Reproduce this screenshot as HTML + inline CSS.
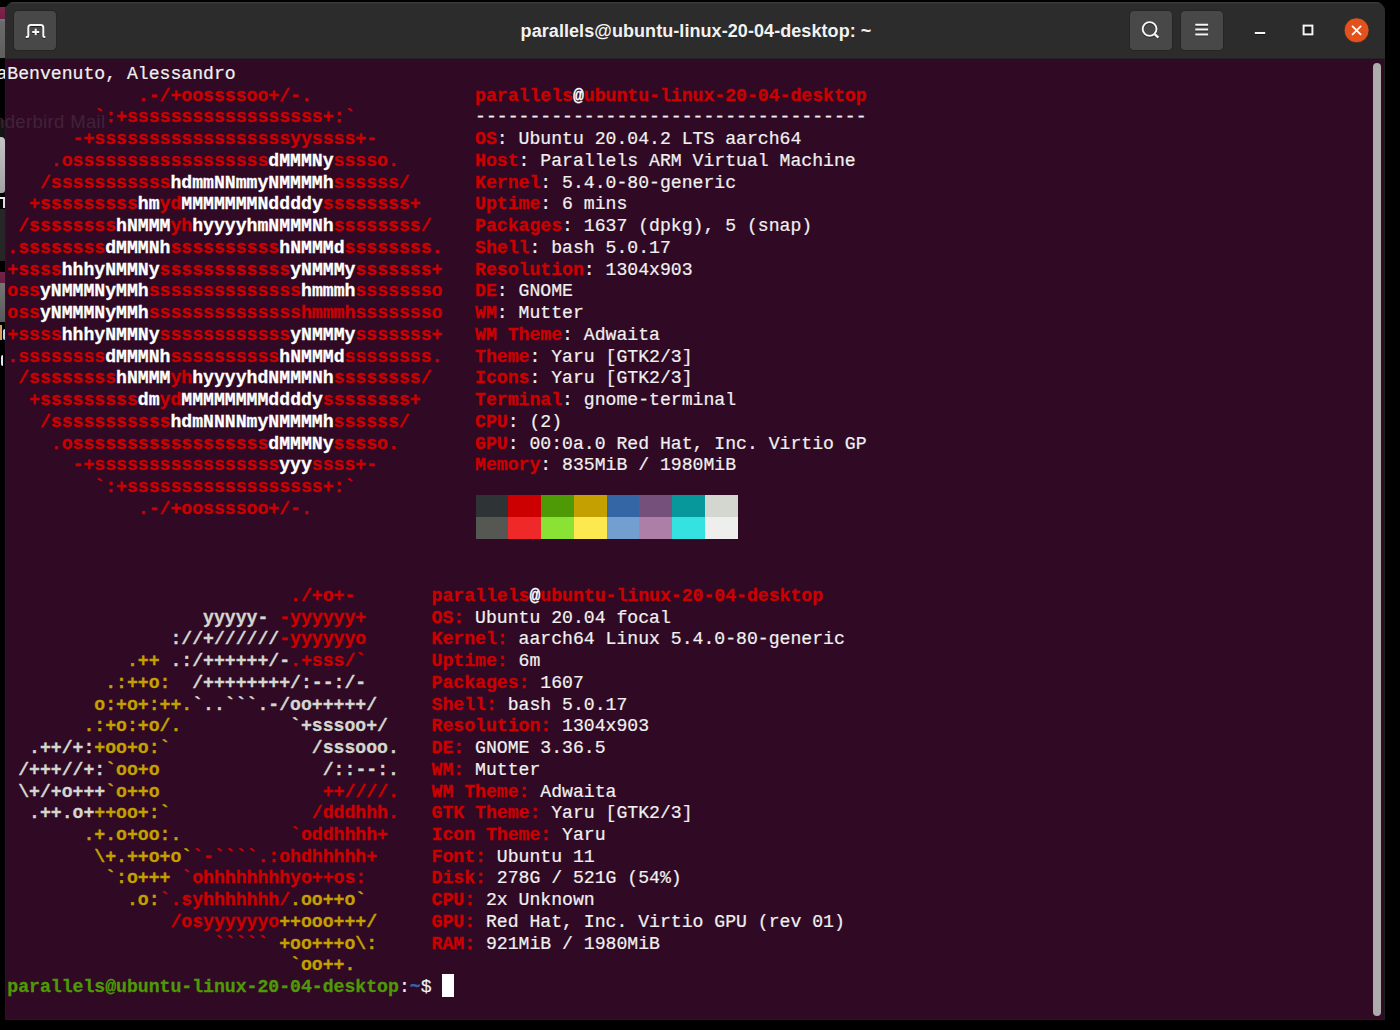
<!DOCTYPE html>
<html>
<head>
<meta charset="utf-8">
<title>parallels@ubuntu-linux-20-04-desktop: ~</title>
<style>
html,body{margin:0;padding:0;}
body{width:1400px;height:1030px;background:#000;overflow:hidden;position:relative;font-family:"Liberation Sans",sans-serif;}
#desk{position:absolute;left:0;top:0;width:8px;height:1030px;overflow:hidden;}
#desk div{position:absolute;left:0;width:8px;}
#win{position:absolute;left:5px;top:2px;width:1380px;height:1018px;background:#1d1d1d;border-radius:9px 9px 0 0;overflow:hidden;}
#hdr{position:absolute;left:0;top:0;width:1380px;height:56px;background:#2c2c2c;box-shadow:inset 0 1px 0 #3b3b3b,inset 0 2px 0 #323232;border-bottom:1px solid #232323;}
#term{position:absolute;left:1px;top:57px;width:1378px;height:960px;background:#300a24;}
.btn{position:absolute;background:#484848;border-radius:5px;border:1px solid #252525;box-sizing:border-box;}
#title{position:absolute;left:0;width:1380px;top:0;height:57px;line-height:58.6px;text-align:center;padding-left:1px;color:#f2f2f2;font-weight:bold;font-size:18px;white-space:pre;letter-spacing:0.07px;}
.ln{position:absolute;left:7.3px;height:21.743px;line-height:21.743px;font-family:"Liberation Mono",monospace;font-size:18.147px;color:#f0f0f0;-webkit-text-stroke:0.2px;white-space:pre;transform:scaleY(1.06);transform-origin:0 0;}
.r,.w,.v,.y,.g,.b{font-weight:bold;-webkit-text-stroke:0.3px;}
.r{color:#cc0000;}
.w{color:#ffffff;}
.v{color:#d3d7cf;}
.y{color:#c4a000;}
.g{color:#4e9a06;}
.b{color:#3465a4;}
.cb{position:absolute;height:21.9px;width:32.9px;}
#cur{position:absolute;left:442.2px;top:973.8px;width:11.6px;height:22.8px;background:#fff;}
#sb{position:absolute;left:1373px;top:63px;width:8px;height:953px;border-radius:4px;background:#acacac;}
#ghost{position:absolute;left:-6px;top:111px;font-size:18.5px;color:#41223a;white-space:pre;letter-spacing:0.35px;}
svg{position:absolute;overflow:visible;}
</style>
</head>
<body>
<div id="desk">
  <div style="top:7px;height:12px;background:linear-gradient(#83234f,#6e2045);"></div>
  <div style="top:19px;height:39px;background:linear-gradient(#7a7a7a,#6a6a6a 8%,#5e5e5e);"></div>
  <div style="top:120px;height:17px;background:#141414;"></div>
  <div style="top:137px;height:56px;width:5px;background:linear-gradient(#c4c4c4,#a2a2a2);border-radius:0 4px 3px 0;"></div>
  <div style="top:197px;height:2px;width:5px;background:#e8e8e8;"></div>
  <div style="top:199px;height:9px;left:3px;width:2px;background:#dcdcdc;"></div>
  <div style="top:209px;height:52px;background:#262626;"></div>
  <div style="top:272px;height:11px;background:linear-gradient(#74224a,#662042);"></div>
  <div style="top:283px;height:39px;background:linear-gradient(#757575,#5a5a5a);"></div>
  <div style="top:325px;height:15px;left:0px;width:2px;background:#d9a25a;"></div>
  <div style="top:329px;height:11px;left:3px;width:2px;background:#c9d6e8;border-radius:2px 0 0 2px;"></div>
  <div style="top:355px;height:11px;left:1px;width:2px;background:#dfe6f2;border-radius:2px 0 0 2px;"></div>
  <div class="ln" style="left:-3.4px;top:63.0px;width:20px">a</div>
</div>
<div id="win">
  <div id="hdr">
    <div class="btn" style="left:8px;top:8px;width:44px;height:41px;"></div>
    <div class="btn" style="left:1124px;top:8px;width:44px;height:41px;"></div>
    <div class="btn" style="left:1175px;top:8px;width:44px;height:41px;"></div>

    <svg id="ic-newtab" style="left:0;top:0" width="60" height="57" viewBox="5 2 60 57">
      <g fill="none" stroke="#000" stroke-opacity="0.55" stroke-width="2" transform="translate(0,0.9)">
        <path d="M25.8 37 H27.3 Q28.3 37 28.3 36 V27.5 Q28.3 25 30.8 25 H40.8 Q43.3 25 43.3 27.5 V36 Q43.3 37 44.3 37 H45.3"/>
        <path d="M32.2 32 H39.2 M35.7 28.8 V35.2"/>
      </g>
      <g fill="none" stroke="#f6f6f6" stroke-width="2">
        <path d="M25.8 37 H27.3 Q28.3 37 28.3 36 V27.5 Q28.3 25 30.8 25 H40.8 Q43.3 25 43.3 27.5 V36 Q43.3 37 44.3 37 H45.3"/>
        <path d="M32.2 32 H39.2 M35.7 28.8 V35.2"/>
      </g>
    </svg>
    <svg id="ic-search" style="left:1125px;top:9px" width="42" height="39" viewBox="1130 11 42 39">
      <g fill="none" stroke="#000" stroke-opacity="0.5" transform="translate(0,0.9)">
        <circle cx="1149.6" cy="29" r="6.9" stroke-width="1.9"/>
        <path d="M1154.6 34.2 L1158.4 37.6" stroke-width="2.3"/>
      </g>
      <g fill="none" stroke="#f6f6f6">
        <circle cx="1149.6" cy="29" r="6.9" stroke-width="1.9"/>
        <path d="M1154.6 34.2 L1158.4 37.6" stroke-width="2.3"/>
      </g>
    </svg>
    <svg id="ic-menu" style="left:1176px;top:9px" width="42" height="39" viewBox="1181 11 42 39">
      <path d="M1195.3 25.7 H1208.1 M1195.3 30.5 H1208.1 M1195.3 35.3 H1208.1" stroke="#000" stroke-opacity="0.55" stroke-width="2"/>
      <path d="M1195.3 24.8 H1208.1 M1195.3 29.6 H1208.1 M1195.3 34.4 H1208.1" stroke="#f6f6f6" stroke-width="2"/>
    </svg>
    <svg id="ic-wc" style="left:1235px;top:9px" width="145" height="45" viewBox="1240 11 145 45">
      <rect x="1254.8" y="32.9" width="10.4" height="2" fill="#000" fill-opacity="0.5"/>
      <rect x="1254.8" y="32" width="10.4" height="2" fill="#f6f6f6"/>
      <rect x="1303.6" y="26.5" width="8.8" height="8.8" fill="none" stroke="#000" stroke-opacity="0.5" stroke-width="2"/>
      <rect x="1303.6" y="25.6" width="8.8" height="8.8" fill="#000" fill-opacity="0.3" stroke="#f6f6f6" stroke-width="2"/>
      <circle cx="1356.6" cy="30.3" r="12.5" fill="#e3511d" stroke="#20282a" stroke-width="0.8"/>
      <path d="M1352.1 25.8 L1361.1 34.8 M1361.1 25.8 L1352.1 34.8" stroke="#ffffff" stroke-width="1.8"/>
    </svg>
    <div id="title">parallels@ubuntu-linux-20-04-desktop: ~</div>
  </div>
  <div id="term"></div>
</div>
<div id="ghost">nderbird Mail</div>
<div id="text">
<div class="ln" style="top:63.00px">Benvenuto, Alessandro</div>
<div class="ln" style="top:84.74px"><span class="r">            .-/+oossssoo+/-.</span>               <span class="r">parallels</span><span class="w">@</span><span class="r">ubuntu-linux-20-04-desktop</span></div>
<div class="ln" style="top:106.49px"><span class="r">        `:+ssssssssssssssssss+:`</span>           ------------------------------------</div>
<div class="ln" style="top:128.23px"><span class="r">      -+ssssssssssssssssssyyssss+-</span>         <span class="r">OS</span>: Ubuntu 20.04.2 LTS aarch64</div>
<div class="ln" style="top:149.97px"><span class="r">    .ossssssssssssssssss</span><span class="w">dMMMNy</span><span class="r">sssso.</span>       <span class="r">Host</span>: Parallels ARM Virtual Machine</div>
<div class="ln" style="top:171.71px"><span class="r">   /sssssssssss</span><span class="w">hdmmNNmmyNMMMMh</span><span class="r">ssssss/</span>      <span class="r">Kernel</span>: 5.4.0-80-generic</div>
<div class="ln" style="top:193.46px"><span class="r">  +sssssssss</span><span class="w">hm</span><span class="r">yd</span><span class="w">MMMMMMMNddddy</span><span class="r">ssssssss+</span>     <span class="r">Uptime</span>: 6 mins</div>
<div class="ln" style="top:215.20px"><span class="r"> /ssssssss</span><span class="w">hNMMM</span><span class="r">yh</span><span class="w">hyyyyhmNMMMNh</span><span class="r">ssssssss/</span>    <span class="r">Packages</span>: 1637 (dpkg), 5 (snap)</div>
<div class="ln" style="top:236.94px"><span class="r">.ssssssss</span><span class="w">dMMMNh</span><span class="r">ssssssssss</span><span class="w">hNMMMd</span><span class="r">ssssssss.</span>   <span class="r">Shell</span>: bash 5.0.17</div>
<div class="ln" style="top:258.69px"><span class="r">+ssss</span><span class="w">hhhyNMMNy</span><span class="r">ssssssssssss</span><span class="w">yNMMMy</span><span class="r">sssssss+</span>   <span class="r">Resolution</span>: 1304x903</div>
<div class="ln" style="top:280.43px"><span class="r">oss</span><span class="w">yNMMMNyMMh</span><span class="r">ssssssssssssss</span><span class="w">hmmmh</span><span class="r">ssssssso</span>   <span class="r">DE</span>: GNOME</div>
<div class="ln" style="top:302.17px"><span class="r">oss</span><span class="w">yNMMMNyMMh</span><span class="r">sssssssssssssshmmmhssssssso</span>   <span class="r">WM</span>: Mutter</div>
<div class="ln" style="top:323.92px"><span class="r">+ssss</span><span class="w">hhhyNMMNy</span><span class="r">ssssssssssss</span><span class="w">yNMMMy</span><span class="r">sssssss+</span>   <span class="r">WM Theme</span>: Adwaita</div>
<div class="ln" style="top:345.66px"><span class="r">.ssssssss</span><span class="w">dMMMNh</span><span class="r">ssssssssss</span><span class="w">hNMMMd</span><span class="r">ssssssss.</span>   <span class="r">Theme</span>: Yaru [GTK2/3]</div>
<div class="ln" style="top:367.40px"><span class="r"> /ssssssss</span><span class="w">hNMMM</span><span class="r">yh</span><span class="w">hyyyyhdNMMMNh</span><span class="r">ssssssss/</span>    <span class="r">Icons</span>: Yaru [GTK2/3]</div>
<div class="ln" style="top:389.14px"><span class="r">  +sssssssss</span><span class="w">dm</span><span class="r">yd</span><span class="w">MMMMMMMMddddy</span><span class="r">ssssssss+</span>     <span class="r">Terminal</span>: gnome-terminal</div>
<div class="ln" style="top:410.89px"><span class="r">   /sssssssssss</span><span class="w">hdmNNNNmyNMMMMh</span><span class="r">ssssss/</span>      <span class="r">CPU</span>: (2)</div>
<div class="ln" style="top:432.63px"><span class="r">    .ossssssssssssssssss</span><span class="w">dMMMNy</span><span class="r">sssso.</span>       <span class="r">GPU</span>: 00:0a.0 Red Hat, Inc. Virtio GP</div>
<div class="ln" style="top:454.37px"><span class="r">      -+sssssssssssssssss</span><span class="w">yyy</span><span class="r">ssss+-</span>         <span class="r">Memory</span>: 835MiB / 1980MiB</div>
<div class="ln" style="top:476.12px"><span class="r">        `:+ssssssssssssssssss+:`</span></div>
<div class="ln" style="top:497.86px"><span class="r">            .-/+oossssoo+/-.</span></div>
<div class="ln" style="top:584.83px"><span class="r">                          ./+o+-</span>       <span class="r">parallels</span><span class="w">@</span><span class="r">ubuntu-linux-20-04-desktop</span></div>
<div class="ln" style="top:606.57px"><span class="v">                  yyyyy- </span><span class="r">-yyyyyy+</span>      <span class="r">OS:</span> Ubuntu 20.04 focal</div>
<div class="ln" style="top:628.32px"><span class="v">               ://+//////</span><span class="r">-yyyyyyo</span>      <span class="r">Kernel:</span> aarch64 Linux 5.4.0-80-generic</div>
<div class="ln" style="top:650.06px"><span class="y">           .++ </span><span class="v">.:/++++++/-</span><span class="r">.+sss/`</span>      <span class="r">Uptime:</span> 6m</div>
<div class="ln" style="top:671.80px"><span class="y">         .:++o:  </span><span class="v">/++++++++/:--:/-</span>      <span class="r">Packages:</span> 1607</div>
<div class="ln" style="top:693.55px"><span class="y">        o:+o+:++.</span><span class="v">`..```.-/oo+++++/</span>     <span class="r">Shell:</span> bash 5.0.17</div>
<div class="ln" style="top:715.29px"><span class="y">       .:+o:+o/.</span><span class="v">          `+sssoo+/</span>    <span class="r">Resolution:</span> 1304x903</div>
<div class="ln" style="top:737.03px"><span class="v">  .++/+:</span><span class="y">+oo+o:`</span><span class="v">             /sssooo.</span>   <span class="r">DE:</span> GNOME 3.36.5</div>
<div class="ln" style="top:758.78px"><span class="v"> /+++//+:</span><span class="y">`oo+o</span><span class="v">               /::--:.</span>   <span class="r">WM:</span> Mutter</div>
<div class="ln" style="top:780.52px"><span class="v"> \+/+o+++</span><span class="y">`o++o</span><span class="r">               ++////.</span>   <span class="r">WM Theme:</span> Adwaita</div>
<div class="ln" style="top:802.26px"><span class="v">  .++.o+</span><span class="y">++oo+:`</span><span class="r">             /dddhhh.</span>   <span class="r">GTK Theme:</span> Yaru [GTK2/3]</div>
<div class="ln" style="top:824.00px"><span class="y">       .+.o+oo:.</span><span class="r">          `oddhhhh+</span>    <span class="r">Icon Theme:</span> Yaru</div>
<div class="ln" style="top:845.75px"><span class="y">        \+.++o+o`</span><span class="r">`-````.:ohdhhhhh+</span>     <span class="r">Font:</span> Ubuntu 11</div>
<div class="ln" style="top:867.49px"><span class="y">         `:o+++ </span><span class="r">`ohhhhhhhhyo++os:</span>      <span class="r">Disk:</span> 278G / 521G (54%)</div>
<div class="ln" style="top:889.23px"><span class="y">           .o:</span><span class="r">`.syhhhhhhh/</span><span class="y">.oo++o`</span>      <span class="r">CPU:</span> 2x Unknown</div>
<div class="ln" style="top:910.98px"><span class="r">               /osyyyyyyo</span><span class="y">++ooo+++/</span>     <span class="r">GPU:</span> Red Hat, Inc. Virtio GPU (rev 01)</div>
<div class="ln" style="top:932.72px"><span class="r">                   ````` </span><span class="y">+oo+++o\:</span>     <span class="r">RAM:</span> 921MiB / 1980MiB</div>
<div class="ln" style="top:954.46px"><span class="y">                          `oo++.</span></div>
<div class="ln" style="top:976.21px"><span class="g">parallels@ubuntu-linux-20-04-desktop</span>:<span class="b">~</span>$</div>
</div>
<div id="blocks">
<div class="cb" style="left:475.50px;top:495px;background:#2e3436"></div>
<div class="cb" style="left:508.25px;top:495px;background:#cc0000"></div>
<div class="cb" style="left:541.00px;top:495px;background:#4e9a06"></div>
<div class="cb" style="left:573.75px;top:495px;background:#c4a000"></div>
<div class="cb" style="left:606.50px;top:495px;background:#3465a4"></div>
<div class="cb" style="left:639.25px;top:495px;background:#75507b"></div>
<div class="cb" style="left:672.00px;top:495px;background:#06989a"></div>
<div class="cb" style="left:704.75px;top:495px;background:#d3d7cf"></div>
<div class="cb" style="left:475.50px;top:516.9px;height:22.6px;background:#555753"></div>
<div class="cb" style="left:508.25px;top:516.9px;height:22.6px;background:#ef2929"></div>
<div class="cb" style="left:541.00px;top:516.9px;height:22.6px;background:#8ae234"></div>
<div class="cb" style="left:573.75px;top:516.9px;height:22.6px;background:#fce94f"></div>
<div class="cb" style="left:606.50px;top:516.9px;height:22.6px;background:#729fcf"></div>
<div class="cb" style="left:639.25px;top:516.9px;height:22.6px;background:#ad7fa8"></div>
<div class="cb" style="left:672.00px;top:516.9px;height:22.6px;background:#34e2e2"></div>
<div class="cb" style="left:704.75px;top:516.9px;height:22.6px;background:#eeeeec"></div>
</div>
<div id="cur"></div>
<div id="sb"></div>
</body>
</html>
